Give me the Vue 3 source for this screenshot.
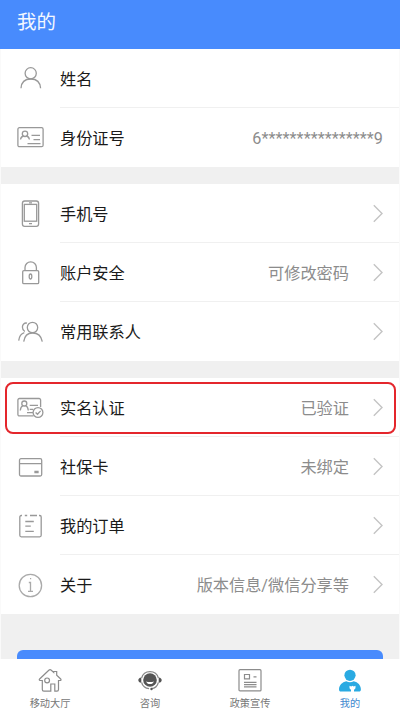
<script setup>
const groups = [
  [
    { icon: 'person', label: '姓名', value: '' },
    { icon: 'id', label: '身份证号', value: '6****************9', masked: true },
  ],
  [
    { icon: 'phone', label: '手机号', value: '', arrow: true },
    { icon: 'lock', label: '账户安全', value: '可修改密码', arrow: true },
    { icon: 'people', label: '常用联系人', value: '', arrow: true },
  ],
  [
    { icon: 'verify', label: '实名认证', value: '已验证', arrow: true, marked: true },
    { icon: 'card', label: '社保卡', value: '未绑定', arrow: true },
    { icon: 'order', label: '我的订单', value: '', arrow: true },
    { icon: 'info', label: '关于', value: '版本信息/微信分享等', arrow: true },
  ],
]
const tabs = [
  { icon: 'home', label: '移动大厅' },
  { icon: 'service', label: '咨询' },
  { icon: 'news', label: '政策宣传' },
  { icon: 'me', label: '我的', active: true },
]
</script>

<template>
  <div class="screen">
    <header class="header">我的</header>
    <main class="content">
      <section v-for="(rows, g) in groups" :key="g" class="group">
        <div v-for="row in rows" :key="row.label" class="row">
          <svg class="icon" viewBox="0 0 31 31">
            <g v-if="row.icon === 'person'">
              <circle cx="15.7" cy="10.3" r="5.6" />
              <path d="M6 25.3C6.3 19.5 10 16 15.8 16S25.2 19.5 25.6 25.3" />
            </g>
            <g v-else-if="row.icon === 'id'">
              <rect x="2.9" y="5.7" width="25.2" height="19" rx="1.5" />
              <circle cx="10" cy="11.8" r="2.7" />
              <path d="M5.5 17.5c.3-2 1.500-3.200 3.200-3.500M11.300 14c1.700.4 2.800 1.600 3.100 3.500M16.500 13.400H25M18.500 17.600H25M12.500 21.600H25.500" />
            </g>
            <g v-else-if="row.icon === 'phone'">
              <rect x="7.4" y="3" width="16.2" height="25.300" rx="2.300" />
              <rect x="9.300" y="6.400" width="12.400" height="16.800" />
              <path d="M14 4.800h3M14 25.600h3" />
            </g>
            <g v-else-if="row.icon === 'lock'">
              <rect x="7.700" y="13.600" width="16" height="13" rx="1.200" />
              <path d="M10 13.500V10.500a5.700 5.700 0 0 1 11.400 0v3" />
              <ellipse cx="15.500" cy="19.500" rx="1.300" ry="2.500" />
            </g>
            <g v-else-if="row.icon === 'people'">
              <circle cx="17.500" cy="11.500" r="5.200" />
              <path d="M8.700 25.700c.7-5.200 3.400-8.700 8.800-8.700s8.900 3.400 9.800 8.700M12 7.100C9.300 6.500 7.400 8.500 7.400 11.100c0 2 .8 3.500 2.400 4.400M9.300 16.700C6 17.800 4.200 20.500 3.700 24.700" />
            </g>
            <g v-else-if="row.icon === 'verify'">
              <path d="M18.500 23.900H4.400a1.500 1.500 0 0 1-1.500-1.500V8a1.500 1.500 0 0 1 1.500-1.500h19.700A1.500 1.500 0 0 1 25.600 8v7" />
              <circle cx="9.300" cy="11.500" r="2.500" />
              <path d="M5.300 18.500c.2-2.700 1.200-4.200 2.700-4.800M10.600 13.700c1.400.6 2.500 2.200 2.700 4.800M14.700 13.400h8.300M14.700 17.400h3.500M12 20.700h6" />
              <circle cx="23" cy="20.500" r="4.900" />
              <path d="m20.600 20.500 1.900 1.800 3.100-3.400" />
            </g>
            <g v-else-if="row.icon === 'card'">
              <rect x="4.500" y="7.700" width="22.200" height="17.300" rx="1.500" />
              <path d="M4.500 12.600h22.200M20 20.300h3v1.200h-3z" />
            </g>
            <g v-else-if="row.icon === 'order'">
              <path d="M7 5.500H6.300a1.500 1.500 0 0 0-1.500 1.500v18.300a1.500 1.500 0 0 0 1.500 1.500h18.400a1.500 1.500 0 0 0 1.500-1.500V7a1.500 1.500 0 0 0-1.500-1.500H24M9.800 5.500h2.400M15 5.500h7M10.300 11.500h8.500M10.300 16.200h5.500M10.300 21.300h8.500" />
            </g>
            <g v-else class="light">
              <circle cx="15.400" cy="16.500" r="11.200" />
              <path d="M13.800 13.500h1.700v8.700M13 22.300h5M15 9.700h1.200" />
            </g>
          </svg>
          <div class="body">
            <span class="label">{{ row.label }}</span>
            <span class="value" :class="{ masked: row.masked }">{{ row.value }}</span>
            <svg v-if="row.arrow" class="arrow" viewBox="0 0 10 19">
              <path d="M.8 1.200 9 9.500.8 17.800" />
            </svg>
          </div>
          <div v-if="row.marked" class="mark"></div>
        </div>
      </section>
      <div class="action"><div class="button"></div></div>
    </main>
    <nav class="tabs">
      <div v-for="tab in tabs" :key="tab.label" class="tab" :class="{ active: tab.active }">
        <svg class="tab-icon" viewBox="0 0 26 26">
          <g v-if="tab.icon === 'home'">
            <path d="M5.300 13.500H3c-.8 0-1-.9-.4-1.500L11.800 3.200c.8-.7 1.700-.7 2.500 0l2.400 2.200V4.500h3v3.700l4 3.800c.6.600.3 1.500-.5 1.500h-1.700v9c0 1.100-.5 1.600-1.500 1.600h-2.200V17h-4v7.100H6.900c-1.100 0-1.600-.5-1.600-1.600z" />
            <circle cx="10.100" cy="13.400" r="2.400" />
          </g>
          <g v-else-if="tab.icon === 'service'">
            <circle class="dark" cx="13" cy="13" r="6.800" />
            <path class="thin" d="M4.600 11a8.700 8.700 0 0 1 16.800 0M4.600 15.500c1 3.600 4 5.800 7.500 6.200M21.400 15.500c-1 3.600-3.500 5.800-7 6.200" />
            <path class="dark" d="M4.300 10.500v5.300c-4-.2-4-5.100 0-5.300zM21.700 10.500v5.300c4-.2 4-5.100 0-5.300z" />
            <path class="smile" d="M9.200 14.200c1.800 1.200 5.800 1.200 7.600 0-.5 3.800-7.100 3.800-7.600 0z" />
            <circle class="dark" cx="14.500" cy="22" r="1.200" />
          </g>
          <g v-else-if="tab.icon === 'news'">
            <rect x="2" y="2.700" width="22" height="21.200" rx="1" />
            <path d="M7.500 7.500h5v4.300h-5zM16.500 9.800h3M7 15.300h12.500M7 17.600h12.500M7 19.900h12.500" />
          </g>
          <g v-else class="filled">
            <circle cx="13" cy="8.300" r="5.600" />
            <path d="M9.300 14.200c2.200 1.400 5.200 1.400 7.400 0 4.300 1 7 3.900 7.200 8 0 1.600-.6 2.300-2 2.300H17v-1.700c1-.4 1.500-1.200 1.500-2.200v-1.800l-1.700.7-1.300-.8-1.300.8-1.700-.7v1.800c0 1 .5 1.800 1.500 2.200v1.700H4c-1.400 0-2-.7-2-2.300.2-4.100 3-7 7.300-8z" />
          </g>
        </svg>
        <span>{{ tab.label }}</span>
      </div>
    </nav>
  </div>
</template>

<style>
body {
  margin: 0;
}
</style>

<style scoped>
.screen {
  box-sizing: border-box;
  width: 400px;
  height: 711px;
  display: flex;
  flex-direction: column;
  overflow: hidden;
  background: #fff;
  font-family: Roboto, "Noto Sans CJK SC", sans-serif;
}
.header {
  box-sizing: border-box;
  height: 49px;
  flex: none;
  padding: 9px 17px 0;
  background: #488bfd;
  color: #f4f8ff;
  font-size: 19.5px;
  line-height: 28px;
}
.content {
  box-sizing: border-box;
  height: 610px;
  flex: none;
  display: flex;
  flex-direction: column;
  gap: 17px;
  overflow: hidden;
  background: #f0f0f0;
  border: 0 solid #fafafa;
  border-width: 0 1px;
}
.group {
  margin: 0 -1px;
  background: #fff;
}
.row {
  position: relative;
  box-sizing: border-box;
  height: 59px;
  display: flex;
  align-items: center;
  padding-left: 15px;
}
.icon {
  width: 31px;
  height: 31px;
  flex: none;
  fill: none;
  stroke: #999;
  stroke-width: 1.3;
}
.light {
  stroke: #aaa;
}
.body {
  box-sizing: border-box;
  flex: 1;
  height: 59px;
  margin-left: 14px;
  padding-right: 17px;
  display: flex;
  align-items: center;
  border-bottom: 1px solid #f0f0f0;
}
.row:last-child .body {
  border-bottom-color: transparent;
}
.label {
  flex: 1;
  padding-top: 4px;
  color: #1a1a1a;
  font-size: 16.2px;
  line-height: 24px;
}
.value {
  padding-top: 4px;
  color: #8c8c8c;
  font-size: 16.2px;
  line-height: 24px;
}
.masked {
  letter-spacing: 0.05px;
}
.arrow {
  width: 10px;
  height: 19px;
  margin-left: 24px;
  fill: none;
  stroke: #c4c4c4;
  stroke-width: 1.4;
}
.mark {
  position: absolute;
  box-sizing: border-box;
  left: 5px;
  top: 4px;
  width: 391px;
  height: 52px;
  border: 2px solid #e4262c;
  border-radius: 8px;
}
.action {
  margin-top: 19px;
  padding: 0 16px;
}
.button {
  height: 44px;
  border-radius: 6px;
  background: #488bfd;
}
.tabs {
  flex: 1;
  display: flex;
  background: #fff;
}
.tab {
  flex: 1;
  display: flex;
  flex-direction: column;
  align-items: center;
  padding-top: 8px;
  color: #777;
  font-size: 10.2px;
  line-height: 15px;
}
.tab.active {
  color: #4289cf;
}
.tab-icon {
  width: 26px;
  height: 26px;
  margin-bottom: 3px;
  fill: none;
  stroke: #8c8c8c;
  stroke-width: 1.2;
}
.dark {
  fill: #555;
  stroke: none;
}
.smile {
  fill: #fff;
  stroke: none;
}
.thin {
  stroke: #888;
}
.filled {
  fill: #2aaae2;
  stroke: none;
}
</style>
